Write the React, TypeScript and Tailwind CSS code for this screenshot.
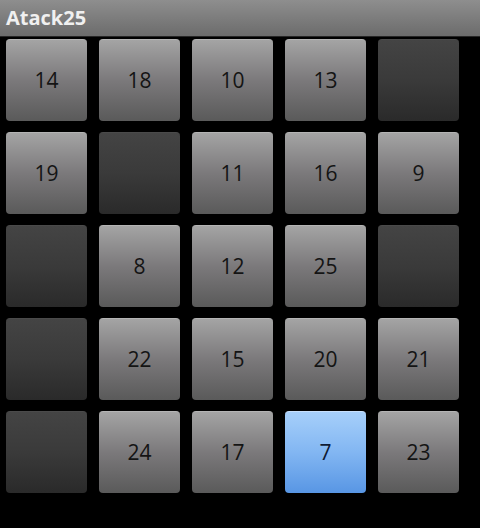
import React from 'react';

// 0 = empty (dark) tile
const cells: number[] = [
  14, 18, 10, 13, 0,
  19, 0, 11, 16, 9,
  0, 8, 12, 25, 0,
  0, 22, 15, 20, 21,
  0, 24, 17, 7, 23,
];

const Tile = ({ value }: { value: number }) => {
  if (value === 0) {
    return (
      <div className="h-[82px] w-[81px] rounded-[4px] border-t border-[#4a4a4a] bg-gradient-to-b from-[#444444] via-[#3a3a3a] to-[#2a2a2a]" />
    );
  }
  if (value === 7) {
    return (
      <div className="flex h-[82px] w-[81px] items-center justify-center rounded-[4px] border-t border-[#c8e0fc] bg-gradient-to-b from-[#a6cffa] via-[#82b6f2] to-[#5896e4] text-[21px] text-[#0e1a33]">
        {value}
      </div>
    );
  }
  return (
    <div className="flex h-[82px] w-[81px] items-center justify-center rounded-[4px] border-t border-[#b4b4b4] bg-gradient-to-b from-[#a4a4a4] via-[#7b797b] to-[#5a5a5a] text-[21px] text-[#141414]">
      {value}
    </div>
  );
};

export default function App() {
  return (
    <div
      className="h-[528px] w-[480px] overflow-hidden bg-black"
      style={{ fontFamily: '"Open Sans", "DejaVu Sans", sans-serif' }}
    >
      <div className="flex h-[37px] items-center border-b border-[#262626] bg-gradient-to-b from-[#8e8e8e] to-[#6c6c6c] pl-[6px]">
        <span className="text-[20px] font-bold leading-none text-[#f0f0f0]">Atack25</span>
      </div>
      <div className="grid grid-cols-[repeat(5,81px)] gap-x-[12px] gap-y-[11px] pl-[6px] pt-[2px]">
        {cells.map((v, i) => (
          <Tile key={i} value={v} />
        ))}
      </div>
    </div>
  );
}
